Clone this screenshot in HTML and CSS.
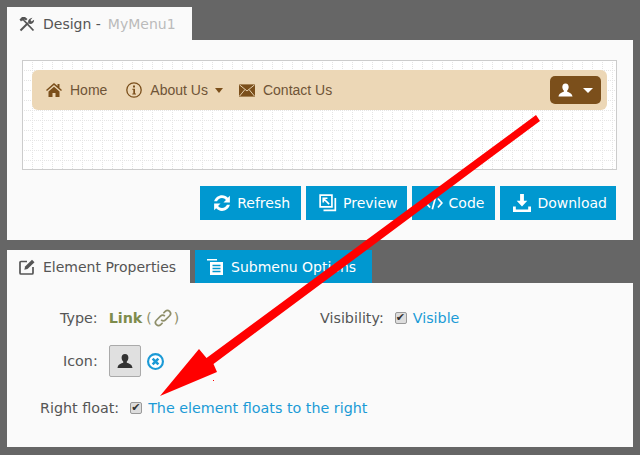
FILE: index.html
```html
<!DOCTYPE html>
<html lang="en">
<head>
<meta charset="utf-8">
<title>Menu designer</title>
<link rel="stylesheet" href="styles.css">
</head>
<body>
<div class="page">
  <section class="block design">
    <div class="tabs"><div class="tab active"><svg class="ic" viewBox="0 0 16 16"><path d="M0.500 3.500 3 1l3 0 2.500 2-1.500 1.500-1.300-1L4.500 5 3 4.500 2 5.500z" fill="#555"/><path d="M5 4.500 14.500 14.500" fill="none" stroke="#555" stroke-width="1.800"/><path d="M1.500 14.500 9 7" fill="none" stroke="#555" stroke-width="2"/><path d="M9.500 7.500c-1.200-2.500.8-5.500 4-5.700l-2 2.300 1 1.300 2.600-1.700c.3 3-2.800 5.300-5.600 3.800z" fill="#555"/></svg><span>Design -</span><span class="muted">MyMenu1</span></div></div>
    <div class="panel">
      <div class="preview">
        <svg class="grid" aria-hidden="true"><defs><pattern id="dots" width="10" height="10" patternUnits="userSpaceOnUse"><path d="M9 1h1v1H9zM9 3h1v1H9zM9 5h1v1H9zM9 7h1v1H9zM9 9h1v1H9zM1 9h1v1H1zM3 9h1v1H3zM5 9h1v1H5zM7 9h1v1H7z" fill="#e4e4e4"/></pattern></defs><rect width="100%" height="100%" fill="url(#dots)"/></svg>
        <nav class="menu">
          <a class="item"><svg class="mi" viewBox="0 0 16 14"><path d="M8 0 0 7l1 1 7-6 7 6 1-1-2.500-2.200V1h-2v2zM2.500 8.500 8 3.800l5.500 4.700V14H9.500v-4h-3v4h-4z" fill="#7b4f1b"/></svg>Home</a>
          <a class="item"><svg class="mi" viewBox="0 0 16 16"><circle cx="8" cy="8" r="7.200" fill="none" stroke="#7b4f1b" stroke-width="1.300"/><path d="M7 3.500h2v2H7zM6.300 6.800h2.700v4.700h1v1H6.300v-1h1v-3.700h-1z" fill="#7b4f1b"/></svg>About Us<i class="caret"></i></a>
          <a class="item"><svg class="mi mail" viewBox="0 0 17 13"><rect width="17" height="13" fill="#7b4f1b"/><path d="M.5.500 8.500 7l8-6.500M.5 12.500 6.300 5.500M16.500 12.500 10.700 5.500" fill="none" stroke="#ecd7b6" stroke-width="1"/></svg>Contact Us</a>
          <button class="user"><svg class="ui" viewBox="0 0 16 14"><path d="M8 0c2.300 0 3.400 1.700 3.400 3.800 0 1.500-.7 3-1.600 3.800v1.200c2 .8 5.200 1.500 5.700 5.200H.5c.5-3.700 3.700-4.400 5.700-5.200V7.600c-.9-.8-1.600-2.300-1.600-3.800C4.600 1.700 5.700 0 8 0z" fill="#fff"/></svg><i class="caret light"></i></button>
        </nav>
      </div>
      <div class="actions">
        <a class="btn refresh"><svg class="bi" viewBox="0 0 16 16"><path d="M1 6.500C2 3 5 1 8 1c2.300 0 4 1 5.200 2.300L15 1.500v6H9.300l2.200-2.200C10.700 4.300 9.500 3.600 8 3.600 6 3.600 4.300 4.800 3.600 6.500zM15 9.500C14 13 11 15 8 15c-2.300 0-4-1-5.200-2.300L1 14.500v-6h5.700l-2.200 2.200c.8 1 2 1.700 3.500 1.700 2 0 3.700-1.200 4.400-2.900z" fill="#fff"/></svg>Refresh</a>
        <a class="btn preview-btn"><svg class="bi" viewBox="0 0 16 16"><path d="M1 1h10.500v10.500H1zM4 4l5 5M3.800 7.500V3.800h3.700" fill="none" stroke="#fff" stroke-width="1.500"/><path d="M14.500 3.500v11H4" fill="none" stroke="#fff" stroke-width="1.500"/></svg>Preview</a>
        <a class="btn code"><svg class="bi" viewBox="0 0 16 16"><path d="M4.500 4 1 8l3.500 4M11.500 4 15 8l-3.500 4M9.500 2.500l-3 11" fill="none" stroke="#fff" stroke-width="1.500"/></svg>Code</a>
        <a class="btn download"><svg class="bi" viewBox="0 0 16 16"><path d="M6.300 0h3.400v6h3l-4.700 5-4.700-5h3zM0 11h2.500v2.700h11V11H16v5H0z" fill="#fff"/></svg>Download</a>
      </div>
    </div>
  </section>
  <section class="block props">
    <div class="tabs">
      <div class="tab active"><svg class="ic" viewBox="0 0 16 16"><path d="M8 2.500H2a1 1 0 0 0-1 1V14a1 1 0 0 0 1 1h11a1 1 0 0 0 1-1V8" fill="none" stroke="#555" stroke-width="1.700"/><path d="M13 .8 15.500 3.200 8.500 10l-3.200.8.800-3.200z" fill="#555"/></svg><span>Element Properties</span></div>
      <div class="tab alt"><svg class="ic" viewBox="0 0 16 16"><path d="M0 0h10v1.500H0zM3 3h13v13H3z" fill="#fff"/><path d="M5.500 6.500h8M5.500 9.500h8M5.500 12.500h8" stroke="#0098d0" stroke-width="1.300"/></svg><span>Submenu Options</span></div>
    </div>
    <div class="panel form">
      <div class="row">
        <div class="field typefield"><span class="label">Type:</span><b class="link">Link</b><span class="paren">(<svg class="chain" viewBox="0 0 16 16"><path d="M6.500 9.500c1.200 1.200 2.500 1 3.500 0l3.300-3.300c1-1 1-2.500 0-3.500s-2.500-1-3.500 0L8.300 4.200M9.500 6.500c-1.200-1.200-2.500-1-3.500 0L2.700 9.800c-1 1-1 2.500 0 3.500s2.500 1 3.500 0l1.500-1.500" fill="none" stroke="#8f8f6a" stroke-width="1.300"/></svg>)</span></div>
        <div class="field visfield"><span class="label">Visibility:</span><i class="check"></i><span class="value">Visible</span></div>
      </div>
      <div class="row iconrow">
        <span class="label iconlabel">Icon:</span>
        <span class="iconbox"><svg class="boxi" viewBox="0 0 16 16"><path d="M8 1c2.300 0 3.400 1.700 3.400 3.800 0 1.500-.7 3-1.600 3.800v1.200c2 .8 5.200 1.300 5.700 5.200H.5c.5-3.900 3.700-4.400 5.700-5.200V8.600c-.9-.8-1.600-2.300-1.600-3.800C4.600 2.700 5.700 1 8 1z" fill="#333"/></svg></span>
        <svg class="remove" viewBox="0 0 16 16"><circle cx="8" cy="8" r="7" fill="#fff" stroke="#1b9ad6" stroke-width="2"/><path d="M5.300 5.300l5.400 5.400M10.700 5.300l-5.400 5.400" stroke="#1b9ad6" stroke-width="2.400"/></svg>
      </div>
      <div class="row floatrow"><span class="label">Right float:</span><i class="check"></i><span class="value">The element floats to the right</span></div>
    </div>
  </section>
  <svg class="arrow" viewBox="0 0 640 455"><path d="M536 115 540 121 213.500 364 217 372 160 396 199 349 206.500 358z" fill="#f00"/><path d="M213 380h1v1h-1z" fill="#f00"/></svg>
</div>
</body>
</html>
```

FILE: styles.css
```css
* { box-sizing: border-box; }
html, body { margin: 0; height: 100%; }
body { background: #666; font-family: "DejaVu Sans", sans-serif; font-size: 14px; color: #555; overflow: hidden; }
.page { position: relative; width: 640px; height: 455px; padding: 7px 7px 8px; display: flex; flex-direction: column; gap: 10px; }
.block { display: flex; flex-direction: column; }
.tabs { display: flex; height: 33px; gap: 5px; }
.tab { display: flex; align-items: center; height: 33px; padding: 0 0 0 12px; white-space: nowrap; }
.tab.active { background: #fafafa; }
.tab.alt { background: #0098d0; color: #fff; padding-left: 12px; }
.design .tab { width: 185px; gap: 8px; }
.props .tab.active { width: 183px; gap: 8px; }
.props .tab.alt { width: 177px; gap: 8px; }
.muted { color: #bbb; margin-left: -1px; }
.ic { width: 16px; height: 16px; flex: none; }
.panel { background: #fafafa; }
.design .panel { height: 200px; padding: 20px 16px 0 15px; }
.preview { position: relative; height: 110px; border: 1px solid #ccc; padding: 9px; background-color: #fff; }
.grid { position: absolute; left: 0; top: 0; width: 100%; height: 100%; }
.menu { position: relative; display: flex; align-items: center; height: 40px; background: #ecd7b6; border-radius: 6px; padding: 0 6px 0 14px; font-family: "Liberation Sans", sans-serif; font-size: 14px; color: #6f5436; }
.item { display: flex; align-items: center; margin-right: 19px; }
.mi { width: 16px; height: 16px; margin-right: 8px; }
.mi.mail { width: 16px; height: 13px; }
.caret { width: 0; height: 0; border: 4px solid transparent; border-top: 5px solid #7b4f1b; border-bottom: 0; margin: 0 -3px 0 7px; }
.caret.light { border-width: 5px 5px 0; border-top-color: #fff; margin: 0 0 0 10px; }
.user { margin-left: auto; display: flex; align-items: center; width: 51px; height: 28px; padding: 0 0 0 8px; border: 0; border-radius: 5px; background: #7b4f1b; }
.ui { width: 15px; height: 14px; }
.actions { display: flex; justify-content: flex-end; gap: 5px; margin: 16px 1px 0 0; }
.btn { display: flex; align-items: center; gap: 6px; height: 34px; padding: 0 10px 0 13px; background: #0098d0; color: #fff; font-size: 14px; }
.btn.refresh { padding-right: 11px; }
.btn.preview-btn { padding-right: 9px; }
.btn.code { padding-right: 11px; }
.btn.download { padding-right: 9px; }
.bi { width: 18px; height: 18px; }
.form { height: 164px; padding: 25px 0 0; font-size: 14.3px; }
.row { display: flex; align-items: center; }
.field { display: flex; align-items: center; }
.label { text-align: right; }
.typefield { width: 313px; padding-left: 53px; }
.typefield .label { margin-right: 11px; }
.link { color: #7e8c4c; }
.paren { display: flex; align-items: center; margin-left: 4px; color: #8f8f6a; font-size: 14px; }
.chain { width: 20px; height: 20px; margin: 0 1px; }
.visfield .label { margin-right: 11px; }
.check { display: block; width: 12px; height: 12px; border: 1px solid #999; border-radius: 2px; background: #ddd; position: relative; margin-right: 6px; }
.check::after { content: "\2714"; position: absolute; left: 0; top: -3px; font-size: 11px; color: #333; font-style: normal; line-height: 16px; }
.value { color: #1b9ad6; }
.iconrow { margin-top: 17px; padding-left: 56px; }
.iconlabel { margin-right: 11px; }
.iconbox { display: flex; align-items: center; justify-content: center; width: 32px; height: 32px; background: #e0e0e0; border: 1px solid #aaa; border-radius: 2px; }
.boxi { width: 16px; height: 16px; }
.remove { width: 17px; height: 17px; margin-left: 6px; }
.floatrow { margin-top: 23px; padding-left: 33px; }
.floatrow .label { margin-right: 11px; }
.arrow { position: absolute; left: 0; top: 0; width: 640px; height: 455px; pointer-events: none; }
```
